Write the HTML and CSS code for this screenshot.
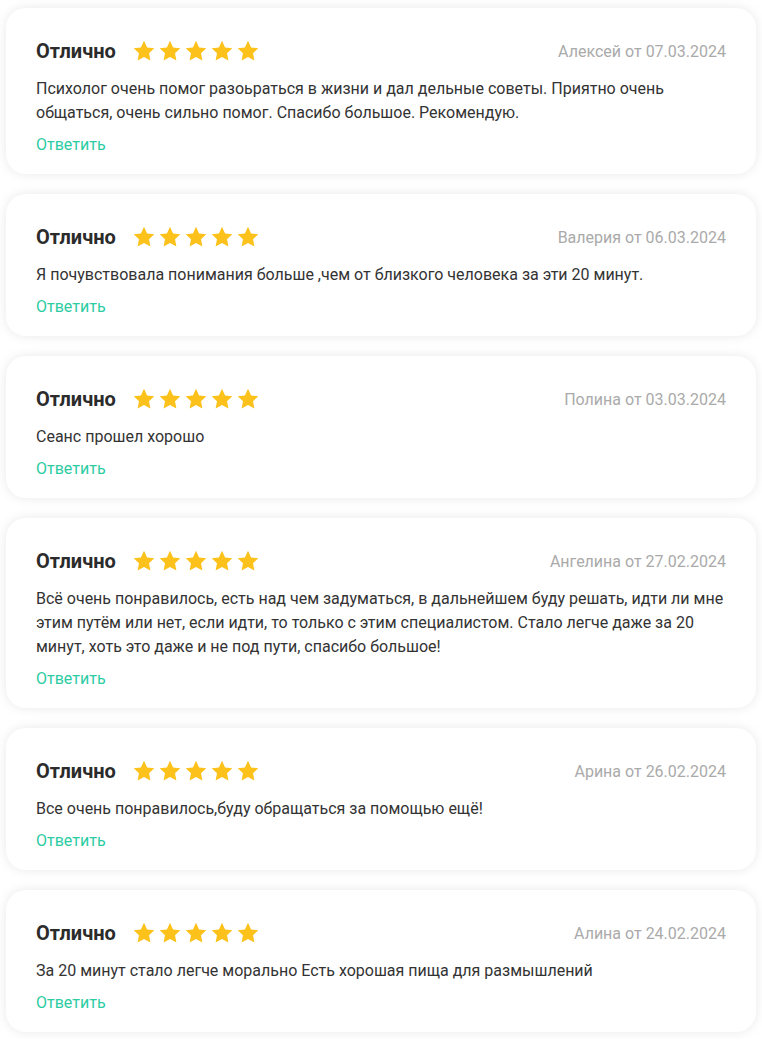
FILE: index.html
```html
<!DOCTYPE html>
<html>
<head>
    <meta charset="utf-8">
    <title>Отзывы</title>
    <link rel="stylesheet" href="styles.css">
</head>
<body>
    <svg width="0" height="0" class="defs">
        <symbol id="star" viewBox="0 0 24 24">
            <path d="M12 1.8l3.1 6.6 7.2.9-5.3 5 1.4 7.1L12 17.9l-6.4 3.5 1.4-7.1-5.3-5 7.2-.9z"/>
        </symbol>
    </svg>
    <div id="reviews">
        <div class="review">
            <div class="review-head">
                <span class="review-title">Отлично</span>
                <span class="stars">
                    <svg><use href="#star"/></svg><svg><use href="#star"/></svg><svg><use href="#star"/></svg><svg><use href="#star"/></svg><svg><use href="#star"/></svg>
                </span>
                <span class="review-author">Алексей от 07.03.2024</span>
            </div>
            <p class="review-text">Психолог очень помог разоьраться в жизни и дал дельные советы. Приятно очень общаться, очень сильно помог. Спасибо большое. Рекомендую.</p>
            <a class="reply" href="#">Ответить</a>
        </div>
        <div class="review">
            <div class="review-head">
                <span class="review-title">Отлично</span>
                <span class="stars">
                    <svg><use href="#star"/></svg><svg><use href="#star"/></svg><svg><use href="#star"/></svg><svg><use href="#star"/></svg><svg><use href="#star"/></svg>
                </span>
                <span class="review-author">Валерия от 06.03.2024</span>
            </div>
            <p class="review-text">Я почувствовала понимания больше ,чем от близкого человека за эти 20 минут.</p>
            <a class="reply" href="#">Ответить</a>
        </div>
        <div class="review">
            <div class="review-head">
                <span class="review-title">Отлично</span>
                <span class="stars">
                    <svg><use href="#star"/></svg><svg><use href="#star"/></svg><svg><use href="#star"/></svg><svg><use href="#star"/></svg><svg><use href="#star"/></svg>
                </span>
                <span class="review-author">Полина от 03.03.2024</span>
            </div>
            <p class="review-text">Сеанс прошел хорошо</p>
            <a class="reply" href="#">Ответить</a>
        </div>
        <div class="review">
            <div class="review-head">
                <span class="review-title">Отлично</span>
                <span class="stars">
                    <svg><use href="#star"/></svg><svg><use href="#star"/></svg><svg><use href="#star"/></svg><svg><use href="#star"/></svg><svg><use href="#star"/></svg>
                </span>
                <span class="review-author">Ангелина от 27.02.2024</span>
            </div>
            <p class="review-text">Всё очень понравилось, есть над чем задуматься, в дальнейшем буду решать, идти ли мне этим путём или нет, если идти, то только с этим специалистом. Стало легче даже за 20 минут, хоть это даже и не под пути, спасибо большое!</p>
            <a class="reply" href="#">Ответить</a>
        </div>
        <div class="review">
            <div class="review-head">
                <span class="review-title">Отлично</span>
                <span class="stars">
                    <svg><use href="#star"/></svg><svg><use href="#star"/></svg><svg><use href="#star"/></svg><svg><use href="#star"/></svg><svg><use href="#star"/></svg>
                </span>
                <span class="review-author">Арина от 26.02.2024</span>
            </div>
            <p class="review-text">Все очень понравилось,буду обращаться за помощью ещё!</p>
            <a class="reply" href="#">Ответить</a>
        </div>
        <div class="review">
            <div class="review-head">
                <span class="review-title">Отлично</span>
                <span class="stars">
                    <svg><use href="#star"/></svg><svg><use href="#star"/></svg><svg><use href="#star"/></svg><svg><use href="#star"/></svg><svg><use href="#star"/></svg>
                </span>
                <span class="review-author">Алина от 24.02.2024</span>
            </div>
            <p class="review-text">За 20 минут стало легче морально Есть хорошая пища для размышлений</p>
            <a class="reply" href="#">Ответить</a>
        </div>
    </div>
</body>
</html>
```

FILE: styles.css
```css
body {
    background-color: #fff;
    margin: 0;
    font-family: Roboto, "Liberation Sans", sans-serif;
    color: #333;
}

.defs {
    position: absolute;
}

#reviews {
    display: flex;
    flex-direction: column;
    gap: 20px;
    padding: 8px 6px 7px;
}

.review {
    background-color: #fff;
    border-radius: 20px;
    box-shadow: 0 0 12px rgba(0, 0, 0, 0.09);
    padding: 29px 30px 17px;
}

.review-head {
    display: flex;
    align-items: center;
    height: 28px;
}

.review-title {
    font-size: 20px;
    font-weight: 700;
    color: #2b2b2b;
}

.stars {
    display: flex;
    gap: 2px;
    margin-left: 16px;
}

.stars svg {
    width: 24px;
    height: 24px;
    fill: #fcc21b;
}

.review-author {
    margin-left: auto;
    font-size: 16px;
    color: #aaa;
}

.review-text {
    margin: 12px 0 0;
    font-size: 16px;
    line-height: 24px;
    color: #333;
}

.reply {
    display: block;
    margin-top: 8px;
    font-size: 16px;
    line-height: 24px;
    color: #2ccca3;
    text-decoration: none;
}
```
